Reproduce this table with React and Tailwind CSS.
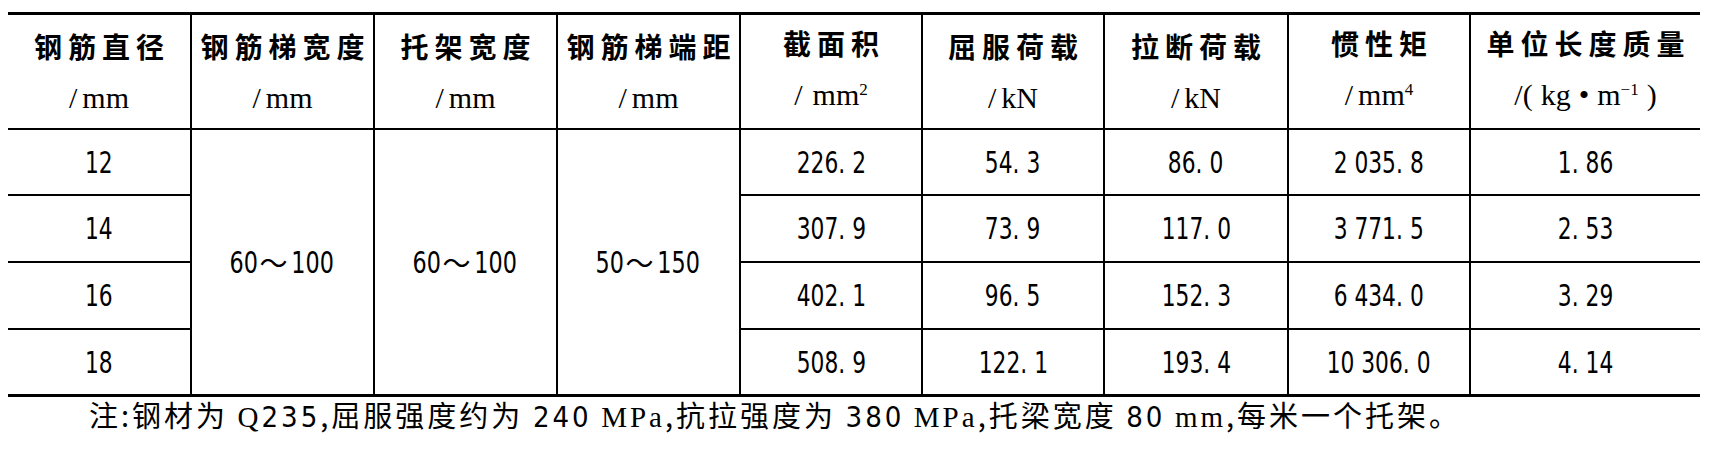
import React from "react";

const cjk = "font-['Noto_Sans_CJK_SC',sans-serif]";
const serif = "font-['Liberation_Serif','Noto_Sans_CJK_SC',serif]";
const narrow = "font-['DejaVu_Sans_Condensed','Liberation_Sans',sans-serif]";

function Num({ v }) {
  const parts = v.split(".");
  return (
    <span className={`${narrow} inline-block scale-x-[0.78] text-[31px] leading-none`}>
      {parts[0]}
      {parts.length > 1 && (
        <>
          <span className="mr-[9px]">.</span>
          {parts[1]}
        </>
      )}
    </span>
  );
}

function Range({ a, b }) {
  return (
    <span className="inline-flex items-center">
      <span className={`${narrow} inline-block scale-x-[0.8] text-[31px] leading-none -mr-[2px]`}>{a}</span>
      <span className={`${cjk} text-[28px] leading-none`}>～</span>
      <span className={`${narrow} inline-block scale-x-[0.8] text-[31px] leading-none -ml-[2px]`}>{b}</span>
    </span>
  );
}

const Slash = () => <span className="mr-[5px] font-light">/</span>;

const heads = [
  ["钢筋直径", <><Slash />mm</>],
  ["钢筋梯宽度", <><Slash />mm</>],
  ["托架宽度", <><Slash />mm</>],
  ["钢筋梯端距", <><Slash />mm</>],
  ["截面积", <><span className="mr-[10px]">/</span>mm<span className="relative -top-[10px] text-[17px]">2</span></>],
  ["屈服荷载", <><Slash />kN</>],
  ["拉断荷载", <><Slash />kN</>],
  ["惯性矩", <><Slash />mm<span className="relative -top-[10px] text-[17px]">4</span></>],
  [
    "单位长度质量",
    <>
      /(<span className="ml-[8px]">kg</span>
      <span className="mx-[8px]">•</span>m<span className="relative -top-[10px] text-[17px]">−1</span>
      <span className="ml-[8px]">)</span>
    </>,
  ],
];

const rows = [
  ["12", "226.2", "54.3", "86.0", "2 035.8", "1.86"],
  ["14", "307.9", "73.9", "117.0", "3 771.5", "2.53"],
  ["16", "402.1", "96.5", "152.3", "6 434.0", "3.29"],
  ["18", "508.9", "122.1", "193.4", "10 306.0", "4.14"],
];

export default function App() {
  return (
    <div className="w-[1717px] h-[456px] bg-white text-black overflow-hidden">
      <div className="pt-[12px] pl-[8px]">
        <div className="w-[1692px] grid grid-cols-[184px_183px_183px_183px_182px_182px_184px_182px_229px] grid-rows-[115px_66px_67px_67px_64px] border-y-[3px] border-black">
          {/* header */}
          {heads.map(([title, unit], i) => (
            <div
              key={title}
              className={`flex flex-col items-center justify-center border-b-2 border-black ${i < 8 ? "border-r-2" : ""}`}
            >
              <div className={`${cjk} font-bold text-[28px] tracking-[6px] pl-[6px] leading-[52px]`}>{title}</div>
              <div className={`${serif} text-[30px] leading-[52px] whitespace-nowrap`}>{unit}</div>
            </div>
          ))}

          {/* body */}
          {rows.map((r, ri) => {
            const last = ri === rows.length - 1;
            const bb = last ? "" : "border-b-2";
            return (
              <React.Fragment key={r[0]}>
                <div className={`flex items-center justify-center border-r-2 border-black ${bb}`}>
                  <Num v={r[0]} />
                </div>
                {ri === 0 && (
                  <>
                    <div className="row-span-4 flex items-center justify-center border-r-2 border-black">
                      <Range a="60" b="100" />
                    </div>
                    <div className="row-span-4 flex items-center justify-center border-r-2 border-black">
                      <Range a="60" b="100" />
                    </div>
                    <div className="row-span-4 flex items-center justify-center border-r-2 border-black">
                      <Range a="50" b="150" />
                    </div>
                  </>
                )}
                {r.slice(1).map((v, ci) => (
                  <div
                    key={ci}
                    className={`flex items-center justify-center border-black ${bb} ${ci < 4 ? "border-r-2" : ""}`}
                  >
                    <Num v={v} />
                  </div>
                ))}
              </React.Fragment>
            );
          })}
        </div>

        {/* note */}
        <p className={`${cjk} text-[29px] leading-[32px] mt-[1px] ml-[81px] tracking-[3px] whitespace-nowrap`}>
          注:钢材为 <span className={serif}>Q</span>
          <span className={narrow}>235</span>,屈服强度约为 <span className={narrow}>240</span>{" "}
          <span className={serif}>MPa</span>,抗拉强度为 <span className={narrow}>380</span>{" "}
          <span className={serif}>MPa</span>,托梁宽度 <span className={narrow}>80</span>{" "}
          <span className={serif}>mm</span>,每米一个托架。
        </p>
      </div>
    </div>
  );
}
